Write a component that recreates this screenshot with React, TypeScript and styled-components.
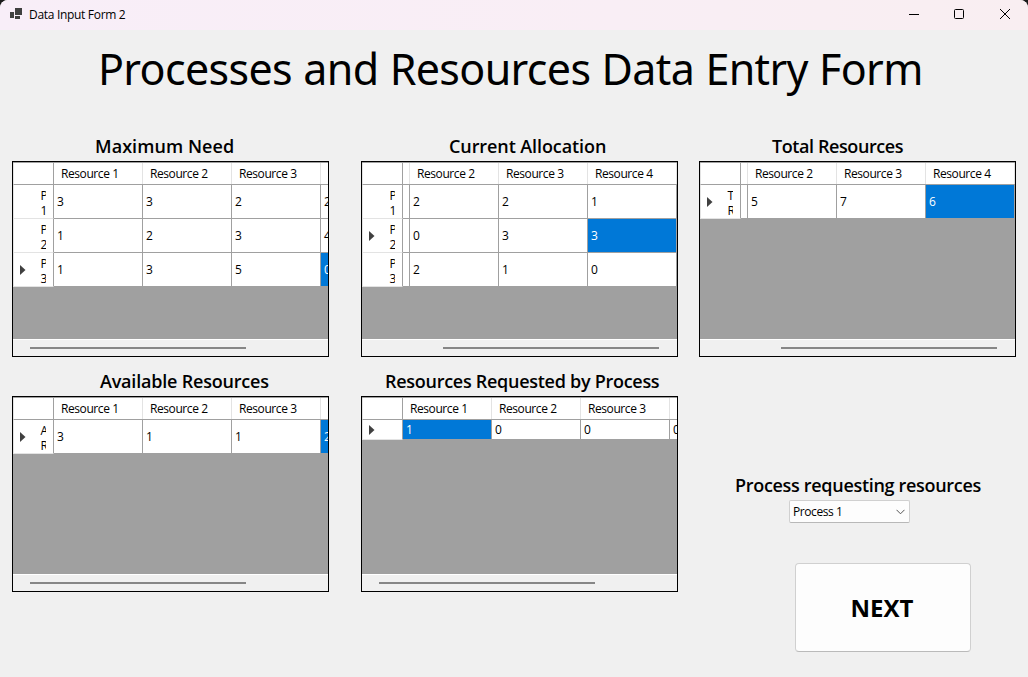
import React from 'react';
import styled, { createGlobalStyle } from 'styled-components';

const Global = createGlobalStyle`
  * { box-sizing: border-box; }
  body { margin: 0; background: #1b1b1b; }
`;

const UI = `'Open Sans', 'Noto Sans', sans-serif`;

const Window = styled.div`
  width: 1028px;
  height: 677px;
  display: flex;
  flex-direction: column;
  overflow: hidden;
  border-radius: 8px 8px 0 0;
  background: #f0f0f0;
  color: #000;
  font-family: ${UI};
  font-size: 12px;
`;

const TitleBar = styled.header`
  height: 30px;
  flex: none;
  display: flex;
  align-items: center;
  padding: 0 0 0 10px;
  background: linear-gradient(90deg, #f8eef8 0%, #f9eef5 60%, #f9eef1 100%);
`;

const AppIcon = styled.svg`
  width: 12px;
  height: 12px;
  margin-bottom: 2px;
  fill: #3f3f3f;
`;

const Caption = styled.span`
  flex: 1;
  margin-left: 7px;
  line-height: 30px;
  letter-spacing: -0.31px;
`;

const WindowButton = styled.span<{ $nudge?: number }>`
  width: 46px;
  height: 30px;
  display: flex;
  align-items: center;
  justify-content: center;
  padding-left: ${(p) => p.$nudge ?? 0}px;
  padding-bottom: 2px;
`;

const Heading = styled.h1`
  margin: 0 0 0 98px;
  height: 104px;
  padding-top: 8px;
  flex: none;
  font-family: 'Noto Sans', sans-serif;
  font-weight: 400;
  font-size: 43px;
  line-height: 62px;
  letter-spacing: -0.65px;
  word-spacing: 0.7px;
  white-space: nowrap;
`;

const Content = styled.main`
  display: grid;
  grid-template-columns: 349px 338px 317px;
  grid-template-rows: 235px 1fr;
  flex: 1;
  padding-left: 12px;
`;

const Panel = styled.section`
  width: 317px;
  display: flex;
  flex-direction: column;
`;

const Label = styled.h2<{ $indent: number; $spacing?: number }>`
  margin: 0;
  height: 27px;
  padding-left: ${(p) => p.$indent}px;
  font-weight: 600;
  font-size: 18px;
  line-height: 25px;
  letter-spacing: ${(p) => p.$spacing ?? -0.2}px;
  white-space: nowrap;
`;

const GridBox = styled.div`
  height: 196px;
  display: flex;
  flex-direction: column;
  border: 1px solid #000;
  background: #a0a0a0;
`;

const Rows = styled.div`
  flex: 1;
  padding-top: 1px;
  overflow: hidden;
`;

const Row = styled.div<{ $height: number }>`
  display: flex;
  height: ${(p) => p.$height}px;
`;

const RowHead = styled.div<{ $corner?: boolean }>`
  width: 41px;
  flex: none;
  display: flex;
  align-items: center;
  padding-left: 6px;
  background: #fff;
  border-left: 1px solid #e3e3e3;
  border-right: 1px solid #a0a0a0;
  border-bottom: 1px solid ${(p) => (p.$corner ? '#a0a0a0' : '#e3e3e3')};
`;

const Marker = styled.svg`
  width: 6px;
  height: 10px;
  flex: none;
  margin-top: 1px;
`;

const RowName = styled.div`
  width: 5.6px;
  margin: 3px 0 0 14.4px;
  overflow: hidden;
  line-height: 15px;
  text-align: left;
`;

const Viewport = styled.div`
  flex: 1;
  display: flex;
  overflow: hidden;
`;

const Track = styled.div<{ $scroll: number }>`
  display: flex;
  flex: none;
  margin-left: -${(p) => p.$scroll}px;
`;

const HeadCell = styled.div`
  width: 89px;
  padding-left: 7px;
  background: linear-gradient(#fff, #fff) 0 0 / 88px 100% no-repeat, #e3e3e3;
  border-bottom: 1px solid #a0a0a0;
  line-height: 21px;
  letter-spacing: -0.42px;
`;

const Cell = styled.div<{ $selected?: boolean }>`
  width: 89px;
  display: flex;
  align-items: center;
  padding-left: 3px;
  border-right: 1px solid #a0a0a0;
  border-bottom: 1px solid #a0a0a0;
  background: ${(p) => (p.$selected ? '#0078d7' : '#fff')};
  color: ${(p) => (p.$selected ? '#fff' : '#000')};
`;

const ScrollBar = styled.div<{ $offset: number }>`
  height: 17px;
  flex: none;
  padding: 7px 0 0 ${(p) => p.$offset}px;
  border-top: 1px solid #fff;
  background: #f0f0f0;
`;

const Thumb = styled.div`
  width: 216px;
  height: 2px;
  background: #868686;
`;

const Actions = styled.section`
  display: flex;
  flex-direction: column;
  align-items: flex-start;
  padding-top: 104px;
`;

const Select = styled.div`
  width: 121px;
  height: 23px;
  margin-left: 90px;
  padding: 0 4px 0 3px;
  display: flex;
  align-items: center;
  justify-content: space-between;
  border: 1px solid #d0d0d0;
  border-bottom-color: #b8b8b8;
  border-radius: 2px;
  background: #fdfdfd;
  letter-spacing: -0.42px;
`;

const NextButton = styled.button`
  width: 176px;
  height: 89px;
  margin: 40px 0 0 96px;
  padding: 0 2px 0 0;
  border: 1px solid #d0d0d0;
  border-bottom-color: #bababa;
  border-radius: 4px;
  background: #fdfdfd;
  color: #000;
  font: 700 24px ${UI};
`;

type RowData = { name?: string[]; values: (number | null)[]; selected?: number };

function DataGrid(props: { rows: RowData[]; scrolled?: boolean; rowHeight?: number }) {
  const { rows, scrolled, rowHeight = 34 } = props;
  const scroll = scrolled ? 82 : 0;
  const columns = ['Resource 1', 'Resource 2', 'Resource 3', 'Resource 4'];
  // The column that lies outside the viewport keeps its cell but not its text.
  const hidden = scrolled ? 0 : 3;
  return (
    <GridBox>
      <Rows>
        <Row $height={22}>
          <RowHead $corner />
          <Viewport>
            <Track $scroll={scroll}>
              {columns.map((title, c) => (
                <HeadCell key={title}>{c === hidden ? null : title}</HeadCell>
              ))}
            </Track>
          </Viewport>
        </Row>
        {rows.map((row, i) => (
          <Row key={i} $height={rowHeight}>
            <RowHead>
              <Marker viewBox="0 0 6 10">
                {row.selected !== undefined && <path d="M0 0L5.5 5L0 10Z" fill="#404040" />}
              </Marker>
              <RowName>
                {row.name?.map((line) => <div key={line}>{line}</div>)}
              </RowName>
            </RowHead>
            <Viewport>
              <Track $scroll={scroll}>
                {row.values.map((v, c) => (
                  <Cell key={c} $selected={row.selected === c}>{v}</Cell>
                ))}
              </Track>
            </Viewport>
          </Row>
        ))}
      </Rows>
      <ScrollBar $offset={scrolled ? 81 : 17}>
        <Thumb />
      </ScrollBar>
    </GridBox>
  );
}

export default function App() {
  return (
    <>
      <Global />
      <Window>
        <TitleBar>
          <AppIcon viewBox="0 0 12 12">
            <rect x="0" y="4" width="4" height="6" />
            <rect x="5" y="0" width="7" height="7" />
            <rect x="5" y="8" width="5" height="3" />
          </AppIcon>
          <Caption>Data Input Form 2</Caption>
          <WindowButton $nudge={2}>
            <svg width="10" height="10" viewBox="0 0 10 10"><path d="M0 5.5H10" stroke="#000" /></svg>
          </WindowButton>
          <WindowButton>
            <svg width="10" height="10" viewBox="0 0 10 10">
              <rect x="0.5" y="0.5" width="9" height="9" rx="1" fill="none" stroke="#000" />
            </svg>
          </WindowButton>
          <WindowButton>
            <svg width="10" height="10" viewBox="0 0 10 10"><path d="M0 0L10 10M10 0L0 10" stroke="#000" /></svg>
          </WindowButton>
        </TitleBar>
        <Heading>Processes and Resources Data Entry Form</Heading>
        <Content>
          <Panel>
            <Label $indent={83} $spacing={0.06}>Maximum Need</Label>
            <DataGrid
              rows={[
                { name: ['P', '1'], values: [3, 3, 2, 2] },
                { name: ['P', '2'], values: [1, 2, 3, 4] },
                { name: ['P', '3'], values: [1, 3, 5, 0], selected: 3 },
              ]}
            />
          </Panel>
          <Panel>
            <Label $indent={88} $spacing={-0.09}>Current Allocation</Label>
            <DataGrid
              scrolled
              rows={[
                { name: ['P', '1'], values: [null, 2, 2, 1] },
                { name: ['P', '2'], values: [null, 0, 3, 3], selected: 3 },
                { name: ['P', '3'], values: [null, 2, 1, 0] },
              ]}
            />
          </Panel>
          <Panel>
            <Label $indent={73} $spacing={-0.41}>Total Resources</Label>
            <DataGrid scrolled rows={[{ name: ['T', 'R'], values: [null, 5, 7, 6], selected: 3 }]} />
          </Panel>
          <Panel>
            <Label $indent={88}>Available Resources</Label>
            <DataGrid rows={[{ name: ['A', 'R'], values: [3, 1, 1, 2], selected: 3 }]} />
          </Panel>
          <Panel>
            <Label $indent={24} $spacing={-0.28}>Resources Requested by Process</Label>
            <DataGrid rowHeight={20} rows={[{ values: [1, 0, 0, 0], selected: 0 }]} />
          </Panel>
          <Actions>
            <Label $indent={36} $spacing={-0.31}>Process requesting resources</Label>
            <Select>
              Process 1
              <svg width="9" height="6" viewBox="0 0 9 6" fill="none" stroke="#555"><path d="M0.5 0.8L4.5 4.8L8.5 0.8" /></svg>
            </Select>
            <NextButton>NEXT</NextButton>
          </Actions>
        </Content>
      </Window>
    </>
  );
}
